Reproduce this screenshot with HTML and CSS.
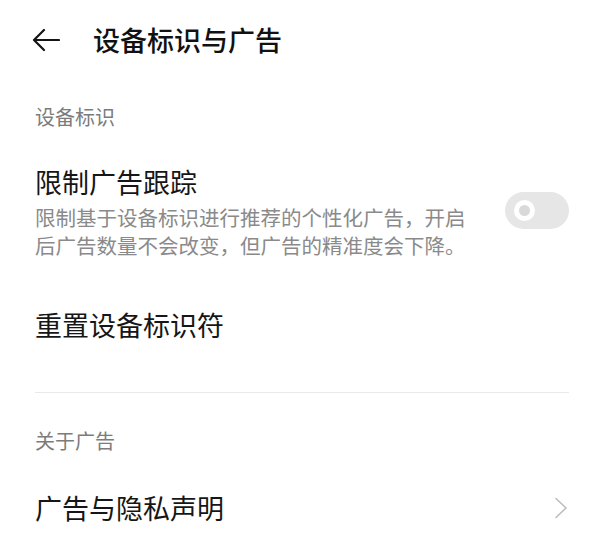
FILE: index.html
```html
<!DOCTYPE html>
<html>
<head>
  <title>设备标识与广告</title>
  <link rel="stylesheet" href="styles.css">
</head>
<body>
  <div class="header">
    <svg class="back" width="28" height="24" viewBox="0 0 28 24">
      <path d="M27 12 H2 M12 2 L2 12 L12 22" fill="none" stroke="#141414" stroke-width="2.2" stroke-linecap="round" stroke-linejoin="round"/>
    </svg>
    <h1>设备标识与广告</h1>
  </div>

  <div class="page">
    <div class="group-label first">设备标识</div>

    <div class="item item-track">
      <div class="item-text">
        <div class="item-title">限制广告跟踪</div>
        <div class="item-desc">限制基于设备标识进行推荐的个性化广告，开启后广告数量不会改变，但广告的精准度会下降。</div>
      </div>
      <div class="switch"><span class="knob"></span></div>
    </div>

    <div class="item item-reset">
      <div class="item-title">重置设备标识符</div>
    </div>

    <div class="divider"></div>

    <div class="group-label second">关于广告</div>

    <div class="item item-privacy">
      <div class="item-title">广告与隐私声明</div>
      <svg class="chevron" width="14" height="22" viewBox="0 0 14 22">
        <path d="M2 1.5 L12 11 L2 20.5" fill="none" stroke="#bdbdbd" stroke-width="1.6" stroke-linecap="round" stroke-linejoin="round"/>
      </svg>
    </div>
  </div>
</body>
</html>
```

FILE: styles.css
```css
body {
  margin: 0;
  background: #fff;
  font-family: "Noto Sans CJK SC", "Noto Sans", sans-serif;
  color: #161616;
}
.header {
  height: 80px;
  display: flex;
  align-items: center;
  padding-left: 32px;
}
.back {
  display: block;
}
.header h1 {
  margin: 0 0 0 33px;
  font-size: 27px;
  font-weight: 500;
  line-height: 36px;
  color: #111;
}
.page {
  padding: 0 31px 0 35px;
}
.group-label {
  font-size: 20px;
  line-height: 28px;
  color: #7c7c7c;
}
.group-label.first {
  margin-top: 23px;
}
.group-label.second {
  margin-top: 34px;
}
.item {
  display: flex;
  align-items: center;
  justify-content: space-between;
}
.item-title {
  font-size: 27px;
  line-height: 36px;
}
.item-desc {
  margin-top: 3px;
  font-size: 20.5px;
  line-height: 28px;
  color: #8a8a8a;
  width: 440px;
}
.item-track {
  margin-top: 33px;
}
.item-reset {
  margin-top: 48px;
}
.item-privacy {
  margin-top: 35px;
}
.switch {
  position: relative;
  width: 64px;
  height: 37px;
  margin-bottom: 3px;
  border-radius: 19px;
  background: #e6e6e6;
  flex-shrink: 0;
}
.knob {
  position: absolute;
  left: 9px;
  top: 8px;
  width: 11px;
  height: 11px;
  border: 5px solid #fff;
  border-radius: 50%;
  background: #d9d9d9;
}
.divider {
  margin-top: 49px;
  height: 1px;
  background: #e9e9e9;
}
.chevron {
  display: block;
  margin-right: 1px;
}
```
